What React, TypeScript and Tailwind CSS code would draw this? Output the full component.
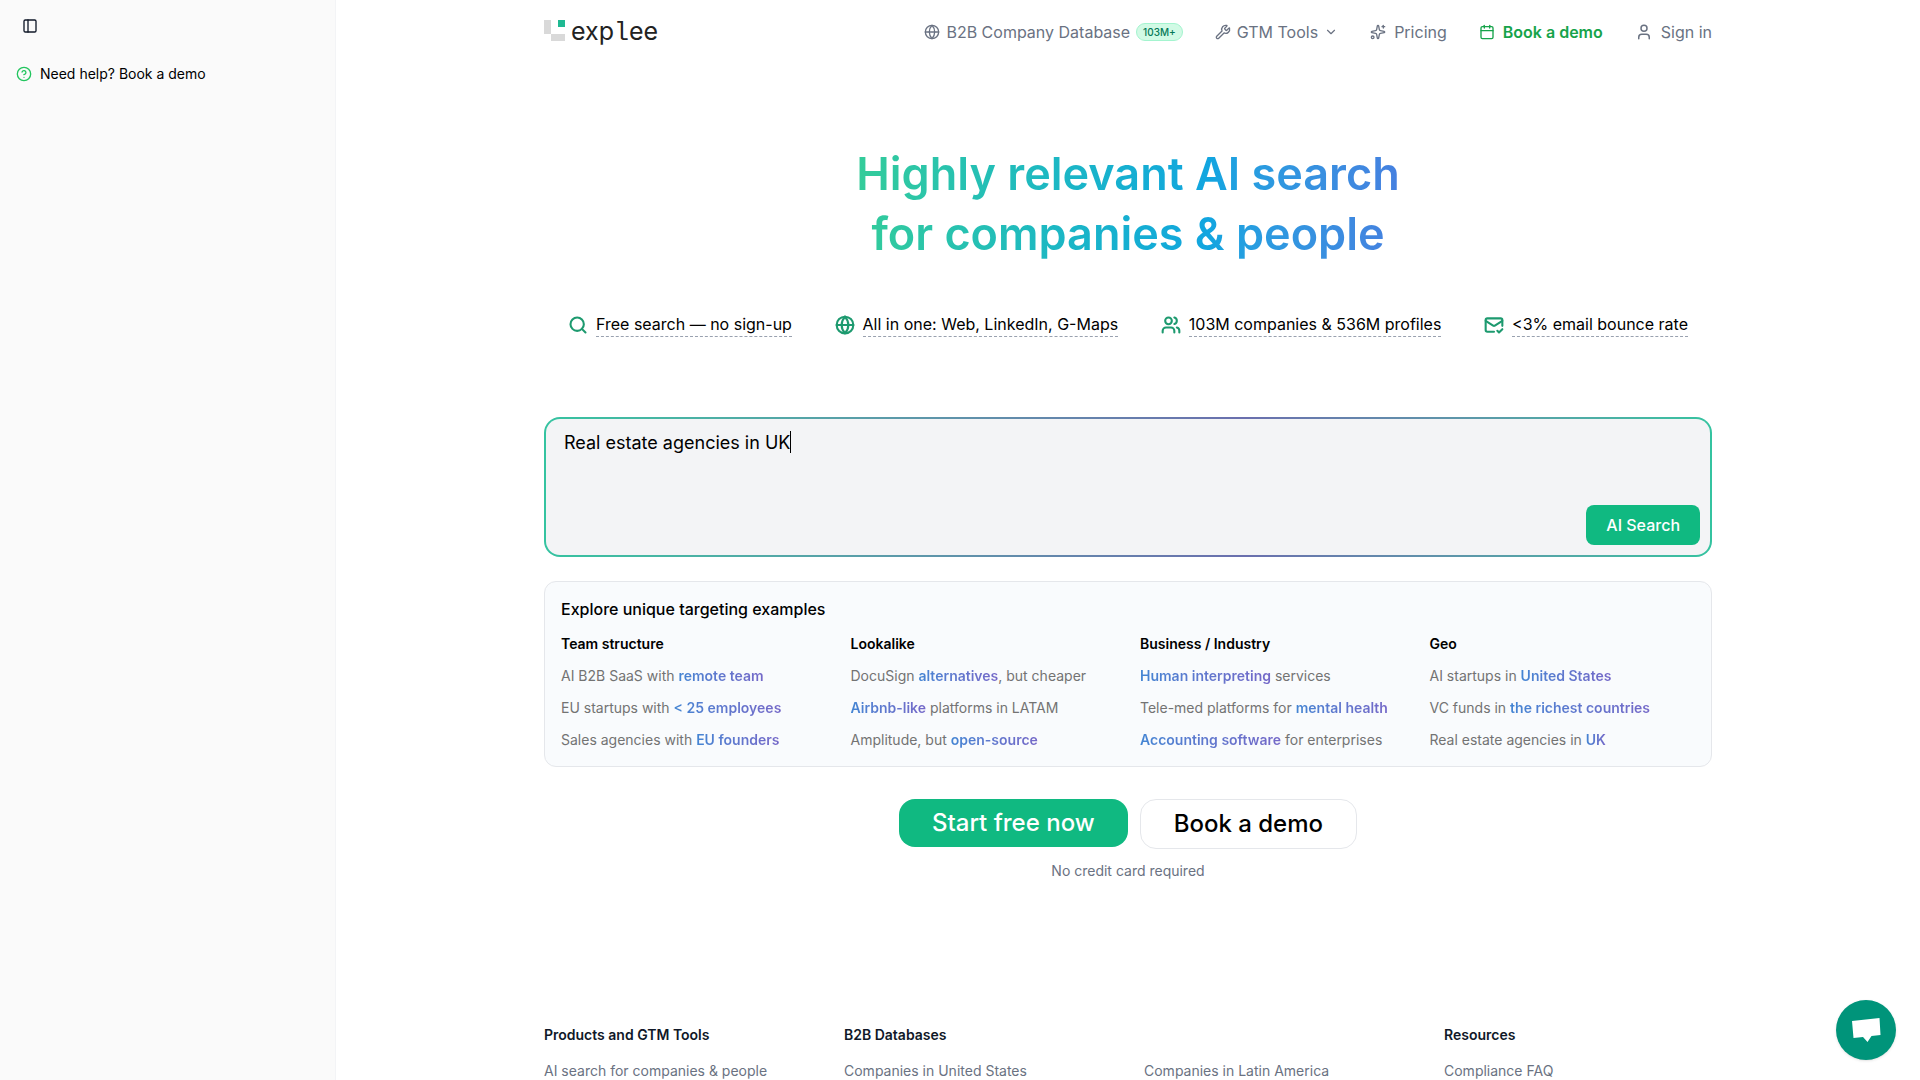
import { useEffect, useRef, useState } from "react";
import type { ReactNode } from "react";
import {
  Calendar,
  ChevronDown,
  CircleHelp,
  Globe,
  MailCheck,
  PanelLeft,
  Search,
  Sparkles,
  User,
  Users,
  Wrench,
} from "lucide-react";

const features = [
  { icon: Search, label: "Free search — no sign-up" },
  { icon: Globe, label: "All in one: Web, LinkedIn, G-Maps" },
  { icon: Users, label: "103M companies & 536M profiles" },
  { icon: MailCheck, label: "<3% email bounce rate" },
];

// [before, highlighted, after]
const examples: { title: string; items: [string, string, string][] }[] = [
  {
    title: "Team structure",
    items: [
      ["AI B2B SaaS with ", "remote team", ""],
      ["EU startups with ", "< 25 employees", ""],
      ["Sales agencies with ", "EU founders", ""],
    ],
  },
  {
    title: "Lookalike",
    items: [
      ["DocuSign ", "alternatives", ", but cheaper"],
      ["", "Airbnb-like", " platforms in LATAM"],
      ["Amplitude, but ", "open-source", ""],
    ],
  },
  {
    title: "Business / Industry",
    items: [
      ["", "Human interpreting", " services"],
      ["Tele-med platforms for ", "mental health", ""],
      ["", "Accounting software", " for enterprises"],
    ],
  },
  {
    title: "Geo",
    items: [
      ["AI startups in ", "United States", ""],
      ["VC funds in ", "the richest countries", ""],
      ["Real estate agencies in ", "UK", ""],
    ],
  },
];

export default function App() {
  return (
    <div className="flex h-screen overflow-hidden bg-white font-['Inter',sans-serif] text-black">
      <Sidebar />
      <div className="min-w-0 flex-1 px-4">
        <div className="mx-auto max-w-[1168px]">
          <Header />
          <main>
            <Hero />
            <SearchBox />
            <Examples />
            <CallToAction />
          </main>
          <Footer />
        </div>
      </div>
      <ChatButton />
    </div>
  );
}

function Sidebar() {
  return (
    <aside className="w-[336px] shrink-0 border-r border-gray-100 bg-[#fafafa] px-4 pt-3">
      <button aria-label="Toggle sidebar" className="flex size-7 items-center justify-center text-gray-900">
        <PanelLeft size={16} />
      </button>
      <a href="#demo" className="mt-6 flex items-center gap-2 text-sm">
        <CircleHelp size={16} className="text-[#22c55e]" />
        Need help? Book a demo
      </a>
    </aside>
  );
}

function Header() {
  return (
    <header className="flex h-16 items-center justify-between">
      <a href="#home" className="flex items-center gap-1.5" aria-label="explee">
        <svg width="21" height="21" viewBox="0 0 21 21" className="mb-1" aria-hidden="true">
          <rect x="0" y="0" width="7" height="14" fill="#d9d9d9" />
          <rect x="7" y="14" width="14" height="7" fill="#d9d9d9" />
          <rect x="14" y="0" width="7" height="7" fill="#1fb992" />
        </svg>
        <span className="text-[25px] leading-7 text-[#222]">
          exp<span className="font-['Liberation_Mono',monospace]">l</span>ee
        </span>
      </a>
      <nav className="flex items-center gap-8 text-base text-gray-500">
        <NavLink icon={<Globe size={16} />}>
          B2B Company Database
          <span className="rounded-full border border-emerald-200 bg-[#d1fae5] px-1.5 text-[10px] leading-4 font-medium text-[#047857]">
            103M+
          </span>
        </NavLink>
        <button className="flex items-center gap-1.5">
          <Wrench size={16} />
          GTM Tools
          <ChevronDown size={14} />
        </button>
        <a href="#pricing" className="flex items-center gap-2">
          <Sparkles size={16} />
          Pricing
        </a>
        <a href="#demo" className="flex items-center gap-2 font-semibold text-[#16a34a]">
          <Calendar size={16} />
          Book a demo
        </a>
        <a href="#signin" className="flex items-center gap-2">
          <User size={18} />
          Sign in
        </a>
      </nav>
    </header>
  );
}

function NavLink({ icon, children }: { icon: ReactNode; children: ReactNode }) {
  return (
    <a href="#nav" className="flex items-center gap-1.5">
      {icon}
      {children}
    </a>
  );
}

function Hero() {
  return (
    <section className="pt-20">
      <h1 className="mx-auto w-fit bg-gradient-to-r from-[#34cc99] via-[#12a5e0] via-65% to-[#4580e0] bg-clip-text text-center text-[45px] leading-[60px] font-semibold text-transparent">
        Highly relevant AI search
        <br />
        for companies &amp; people
      </h1>
      <ul className="mt-12 flex items-center justify-between px-6">
        {features.map(({ icon: Icon, label }) => (
          <li key={label} className="flex items-center gap-2">
            <Icon size={20} strokeWidth={2.5} className="text-[#1d9a6f]" />
            <span className="border-b border-dashed border-gray-400 text-base">{label}</span>
          </li>
        ))}
      </ul>
    </section>
  );
}

function SearchBox() {
  const [query, setQuery] = useState("Real estate agencies in UK");
  const [caretX, setCaretX] = useState(0);
  const ref = useRef<HTMLTextAreaElement>(null);

  // steady caret at the end of the typed line
  useEffect(() => {
    const el = ref.current;
    const ctx = document.createElement("canvas").getContext("2d");
    if (!el || !ctx) return;
    const style = getComputedStyle(el);
    ctx.font = `${style.fontSize} ${style.fontFamily}`;
    setCaretX(parseFloat(style.paddingLeft) + Math.round(ctx.measureText(query).width));
  }, [query]);

  return (
    <form
      className="mt-20 rounded-2xl bg-gradient-to-r from-[#34c3a0] from-0% via-[#6a6fae] via-60% to-[#34c3a0] p-0.5"
      onSubmit={(e) => e.preventDefault()}
    >
      <div className="relative rounded-[14px] bg-gray-100">
        <textarea
          ref={ref}
          aria-label="Search query"
          value={query}
          onChange={(e) => setQuery(e.target.value)}
          className="block h-[136px] w-full resize-none bg-transparent px-[18px] py-2.5 text-lg leading-7 caret-transparent outline-none"
        />
        <span className="pointer-events-none absolute top-3 h-[22px] w-px bg-black" style={{ left: caretX }} />
        <button className="absolute right-2.5 bottom-2.5 h-10 rounded-lg bg-[#10b981] px-5 text-base font-medium text-white">
          AI Search
        </button>
      </div>
    </form>
  );
}

function Examples() {
  return (
    <section className="mt-6 rounded-xl border border-gray-200 bg-[#f9fbfd] px-4 pt-[15px] pb-[14px]">
      <h2 className="text-base font-medium">Explore unique targeting examples</h2>
      <div className="mt-[11px] grid grid-cols-4 gap-6">
        {examples.map((group) => (
          <div key={group.title}>
            <h3 className="text-sm leading-6 font-semibold">{group.title}</h3>
            <ul className="mt-2 space-y-2">
              {group.items.map(([before, highlight, after]) => (
                <li key={highlight} className="text-sm leading-6 whitespace-nowrap text-[#737373]">
                  <a href="#search">
                    {before}
                    <span className="bg-gradient-to-r from-[#4385d3] to-[#7468c8] bg-clip-text font-semibold text-transparent">
                      {highlight}
                    </span>
                    {after}
                  </a>
                </li>
              ))}
            </ul>
          </div>
        ))}
      </div>
    </section>
  );
}

function CallToAction() {
  return (
    <section className="mt-8 text-center">
      <div className="flex items-start justify-center gap-3">
        <a href="#start" className="rounded-2xl bg-[#10b981] px-[33px] text-2xl leading-[48px] font-medium text-white">
          Start free now
        </a>
        <a href="#demo" className="rounded-2xl border border-gray-200 bg-white px-[33px] text-2xl leading-[48px] font-medium">
          Book a demo
        </a>
      </div>
      <p className="mt-3 text-sm text-gray-500">No credit card required</p>
    </section>
  );
}

function Footer() {
  return (
    <footer className="mt-36 grid grid-cols-4 gap-8 text-sm text-gray-500">
      <FooterColumn title="Products and GTM Tools" links={["AI search for companies & people"]} />
      <FooterColumn title="B2B Databases" links={["Companies in United States"]} />
      <FooterColumn links={["Companies in Latin America"]} />
      <FooterColumn title="Resources" links={["Compliance FAQ"]} />
    </footer>
  );
}

function FooterColumn({ title, links }: { title?: string; links: string[] }) {
  return (
    <div>
      <div className="h-5 font-semibold text-gray-900">{title}</div>
      <ul className="mt-4">
        {links.map((link) => (
          <li key={link}>
            <a href="#footer">{link}</a>
          </li>
        ))}
      </ul>
    </div>
  );
}

function ChatButton() {
  return (
    <button
      aria-label="Open chat"
      className="fixed right-6 bottom-5 flex size-[60px] items-center justify-center rounded-full bg-[#00947a] shadow-sm"
    >
      <svg width="30" height="26" viewBox="0 0 30 26" fill="#fff" aria-hidden="true">
        <path d="M1 4 L28.500 1 L29.500 18 L20.500 19 L16.500 25 L12 20 L2.500 21 Z" />
      </svg>
    </button>
  );
}
